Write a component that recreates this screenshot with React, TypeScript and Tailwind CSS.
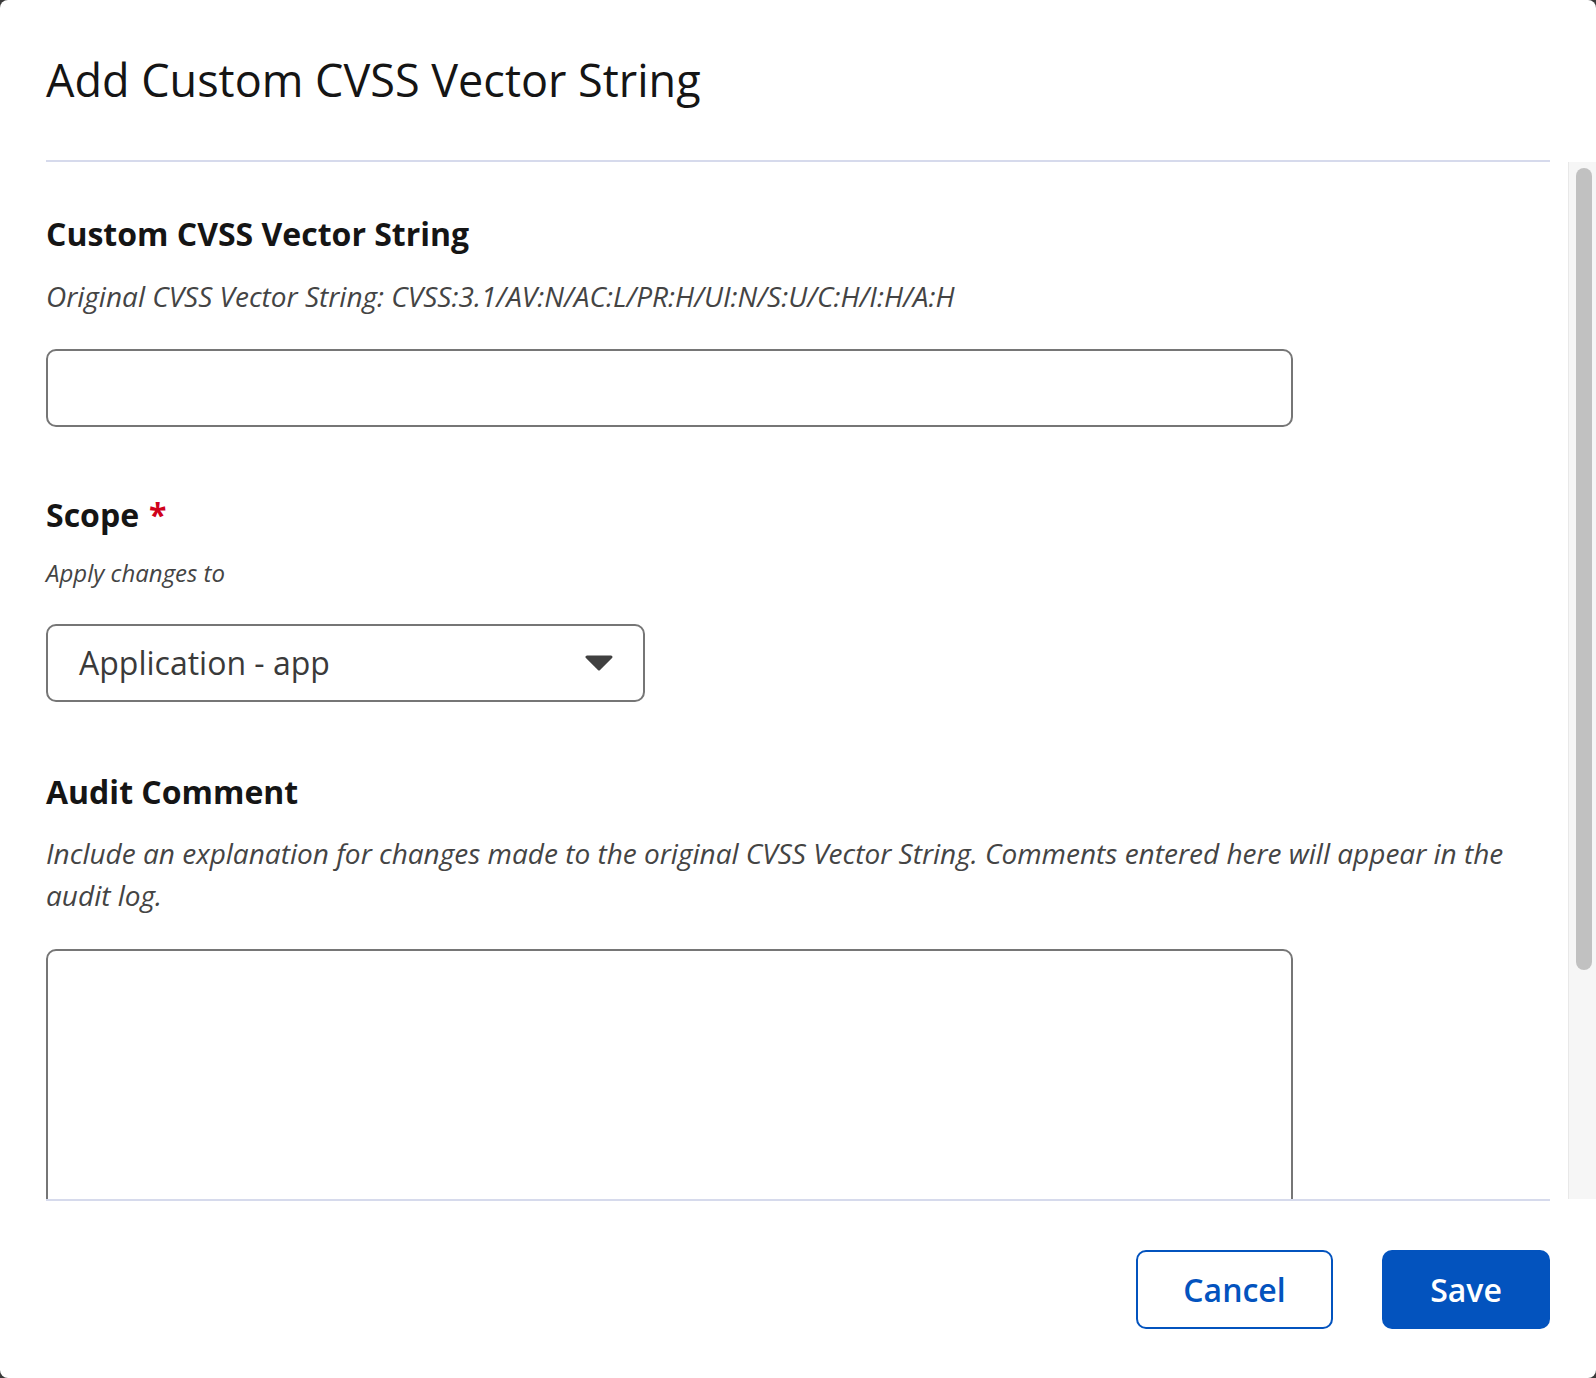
import React from "react";

const font = "font-['Open_Sans','Noto_Sans',sans-serif]";

function Label({ children, required }: { children: React.ReactNode; required?: boolean }) {
  return (
    <div className="flex items-start text-[32px] font-bold leading-[40px] text-[#151515]">
      <span>{children}</span>
      {required && <span className="ml-[10px] text-[#d0021b]">*</span>}
    </div>
  );
}

function Caret() {
  return (
    <svg width="28" height="16" viewBox="0 0 28 16" aria-hidden="true">
      <path d="M2 2 H26 L14 14 Z" fill="#404040" stroke="#404040" strokeWidth="3" strokeLinejoin="round" />
    </svg>
  );
}

export default function App() {
  return (
    <div className={`h-[1378px] w-[1596px] bg-[#3a3a3a] ${font}`}>
      <div className="flex h-full flex-col overflow-hidden rounded-[8px] bg-white">
        {/* Header */}
        <div className="px-[46px] pt-[48px]">
          <div className="border-b-2 border-[#d6daec] pb-[48px]">
            <h2 className="text-[45px] font-normal leading-[64px] text-[#151515]">
              Add Custom CVSS Vector String
            </h2>
          </div>
        </div>

        {/* Scrollable body */}
        <div className="flex min-h-0 flex-1">
          <div className="min-w-0 flex-1 overflow-hidden pl-[46px] pr-[18px] pt-[52px]">
            <Label>Custom CVSS Vector String</Label>
            <p className="mt-[21px] text-[28px] italic leading-[42px] text-[#444]">
              Original CVSS Vector String: CVSS:3.1/AV:N/AC:L/PR:H/UI:N/S:U/C:H/I:H/A:H
            </p>
            <input
              type="text"
              className="mt-[32px] block h-[78px] w-[1247px] rounded-[10px] border-2 border-[#767676] bg-white px-[30px] text-[32px] text-[#333] outline-none"
            />

            <div className="mt-[68px]">
              <Label required>Scope</Label>
            </div>
            <p className="mt-[21px] text-[24px] italic leading-[34px] text-[#444]">Apply changes to</p>
            <div className="mt-[34px] flex h-[78px] w-[599px] items-center justify-between rounded-[10px] border-2 border-[#767676] pl-[31px] pr-[30px]">
              <span className="text-[32px] leading-[44px] text-[#3a3a3a]">Application - app</span>
              <Caret />
            </div>

            <div className="mt-[70px]">
              <Label>Audit Comment</Label>
            </div>
            <p className="mt-[20px] text-[28px] italic leading-[42px] text-[#444]">
              Include an explanation for changes made to the original CVSS Vector String. Comments entered here will
              appear in the audit log.
            </p>
            <textarea className="mt-[33px] block h-[320px] w-[1247px] resize-none rounded-[10px] border-2 border-[#767676] bg-white outline-none" />
          </div>

          {/* Scrollbar */}
          <div className="w-[28px] shrink-0 border-l border-[#e8e8e8] bg-[#f6f6f6] pl-[7px] pt-[6px]">
            <div className="h-[802px] w-[16px] rounded-full bg-[#c1c1c1]" />
          </div>
        </div>

        {/* Footer */}
        <div className="px-[46px]">
          <div className="flex justify-end gap-[49px] border-t-2 border-[#d6daec] pb-[49px] pt-[49px]">
            <button className="flex h-[79px] w-[197px] items-center justify-center rounded-[10px] border-2 border-[#0353be] bg-white text-[32px] font-semibold text-[#0353be]">
              Cancel
            </button>
            <button className="flex h-[79px] w-[168px] items-center justify-center rounded-[10px] bg-[#0353be] text-[32px] font-semibold text-white">
              Save
            </button>
          </div>
        </div>
      </div>
    </div>
  );
}
